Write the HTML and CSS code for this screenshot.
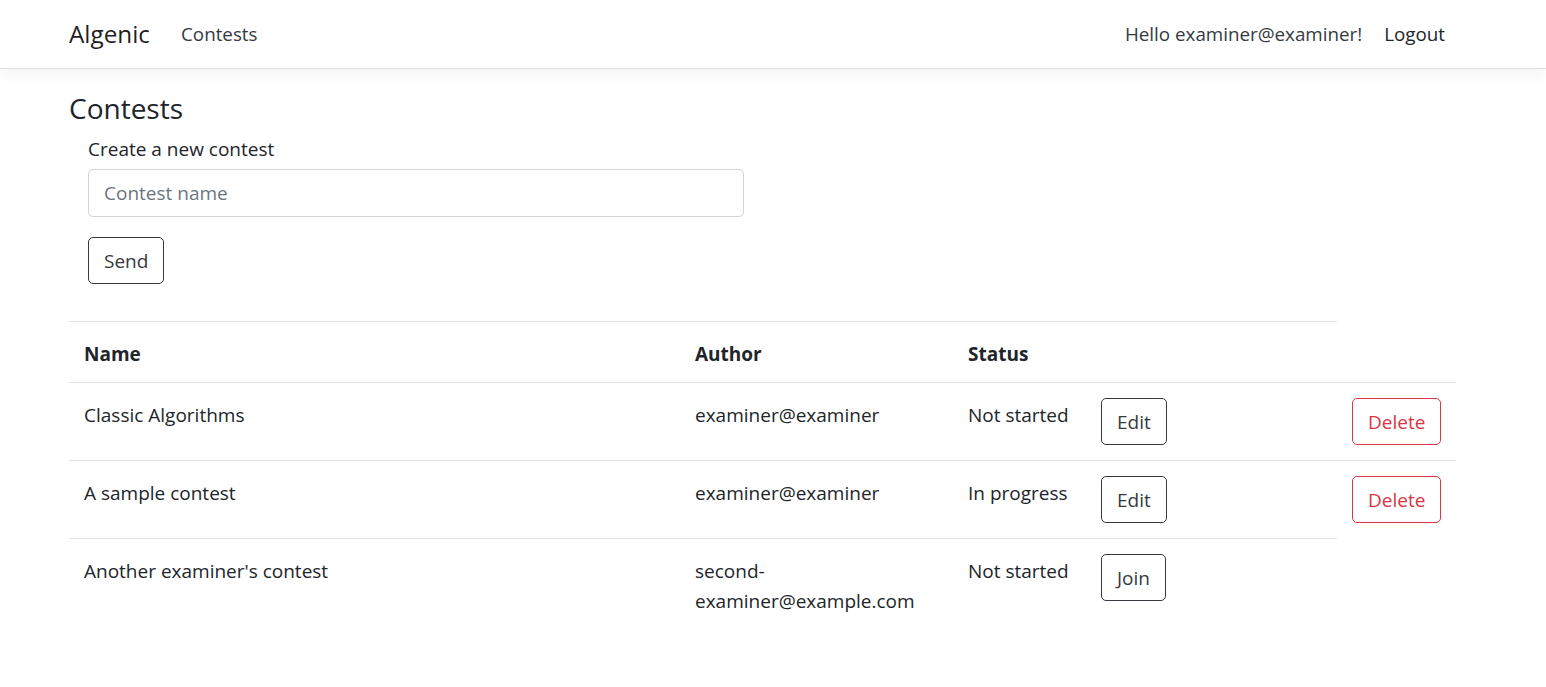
FILE: index.html
```html
<!DOCTYPE html>
<html lang="en">
<head>
<meta charset="utf-8">
<title>Contests - Algenic</title>
<link rel="stylesheet" href="styles.css">
</head>
<body>
<header class="navbar">
  <div class="container nav-inner">
    <a class="brand" href="#">Algenic</a>
    <nav class="nav-left">
      <a class="nav-link" href="#">Contests</a>
    </nav>
    <div class="nav-right">
      <span class="nav-link">Hello examiner@examiner!</span>
      <a class="nav-link logout" href="#">Logout</a>
    </div>
  </div>
</header>
<main class="container main">
  <h4 class="page-title">Contests</h4>
  <form class="create-form">
    <label class="form-label" for="cname">Create a new contest</label>
    <input class="form-control" id="cname" type="text" placeholder="Contest name">
    <button class="btn btn-dark-outline" type="button">Send</button>
  </form>
  <table class="table">
    <colgroup>
      <col class="c-name"><col class="c-author"><col class="c-status"><col class="c-act"><col class="c-del">
    </colgroup>
    <thead>
      <tr><th>Name</th><th>Author</th><th>Status</th><th></th></tr>
    </thead>
    <tbody>
      <tr>
        <td>Classic Algorithms</td>
        <td>examiner@examiner</td>
        <td>Not started</td>
        <td class="cell-btn"><button class="btn btn-dark-outline" type="button">Edit</button></td>
        <td class="cell-btn"><button class="btn btn-danger-outline" type="button">Delete</button></td>
      </tr>
      <tr>
        <td>A sample contest</td>
        <td>examiner@examiner</td>
        <td>In progress</td>
        <td class="cell-btn"><button class="btn btn-dark-outline" type="button">Edit</button></td>
        <td class="cell-btn"><button class="btn btn-danger-outline" type="button">Delete</button></td>
      </tr>
      <tr>
        <td>Another examiner's contest</td>
        <td>second-examiner@example.com</td>
        <td>Not started</td>
        <td class="cell-btn"><button class="btn btn-dark-outline" type="button">Join</button></td>
      </tr>
    </tbody>
  </table>
</main>
</body>
</html>
```

FILE: styles.css
```css
* { box-sizing: border-box; }

html, body {
  margin: 0;
  padding: 0;
  background: #fff;
}

body {
  font-family: "Open Sans", "Noto Sans", "Liberation Sans", sans-serif;
  font-size: 19px;
  line-height: 30px;
  color: #212529;
}

a { text-decoration: none; }

.container {
  width: 1387px;
  margin-left: 69px;
}

/* Navbar */
.navbar {
  height: 69px;
  background: #fff;
  border-bottom: 1px solid #dee2e6;
  box-shadow: 0 5px 15px rgba(0, 0, 0, 0.05);
}

.nav-inner {
  height: 68px;
  display: flex;
  align-items: center;
}

.brand {
  font-size: 24.3px;
  line-height: 36px;
  color: rgba(0, 0, 0, 0.9);
  margin-right: 20px;
}

.nav-left {
  display: flex;
  flex: 1;
}

.nav-right {
  display: flex;
}

.nav-link {
  display: block;
  padding: 10px 10px;
  font-size: 18.8px;
  line-height: 30px;
  color: #343a40;
}

.nav-left .nav-link {
  padding-left: 11px;
}

.nav-link.logout {
  color: #212529;
  padding-left: 12px;
  padding-right: 11px;
}

/* Main */
.main {
  padding-top: 21px;
}

.page-title {
  margin: 0 0 8px 0;
  font-size: 28px;
  line-height: 36px;
  font-weight: 400;
}

.create-form {
  padding-left: 19px;
  display: flex;
  flex-direction: column;
  align-items: flex-start;
}

.form-label {
  display: block;
  margin-bottom: 5px;
  line-height: 30px;
}

.form-control {
  width: 656px;
  height: 48px;
  padding: 8px 15px;
  font-family: inherit;
  font-size: 19px;
  line-height: 30px;
  color: #212529;
  border: 1px solid #ced4da;
  border-radius: 5px;
  background: #fff;
  outline: none;
}

.form-control::placeholder {
  color: #6c757d;
}

.btn {
  display: inline-block;
  font-family: inherit;
  font-size: 19px;
  line-height: 30px;
  padding: 8px 15px 7px;
  border-radius: 5px;
  background: transparent;
  cursor: pointer;
}

.create-form .btn {
  margin-top: 20px;
}

.btn-dark-outline {
  color: #343a40;
  border: 1px solid #343a40;
}

.btn-danger-outline {
  color: #dc3545;
  border: 1px solid #dc3545;
}

/* Table */
.table {
  margin-top: 37px;
  width: 1387px;
  table-layout: fixed;
  border-collapse: collapse;
}

.c-name { width: 611px; }
.c-author { width: 273px; }
.c-status { width: 133px; }
.c-act { width: 251px; }
.c-del { width: 119px; }

.table th,
.table td {
  padding: 17px 15px 13px;
  text-align: left;
  vertical-align: top;
  border-top: 1px solid #dee2e6;
}

.table td.cell-btn {
  padding: 15px;
}

.table th {
  font-weight: 700;
}
```
